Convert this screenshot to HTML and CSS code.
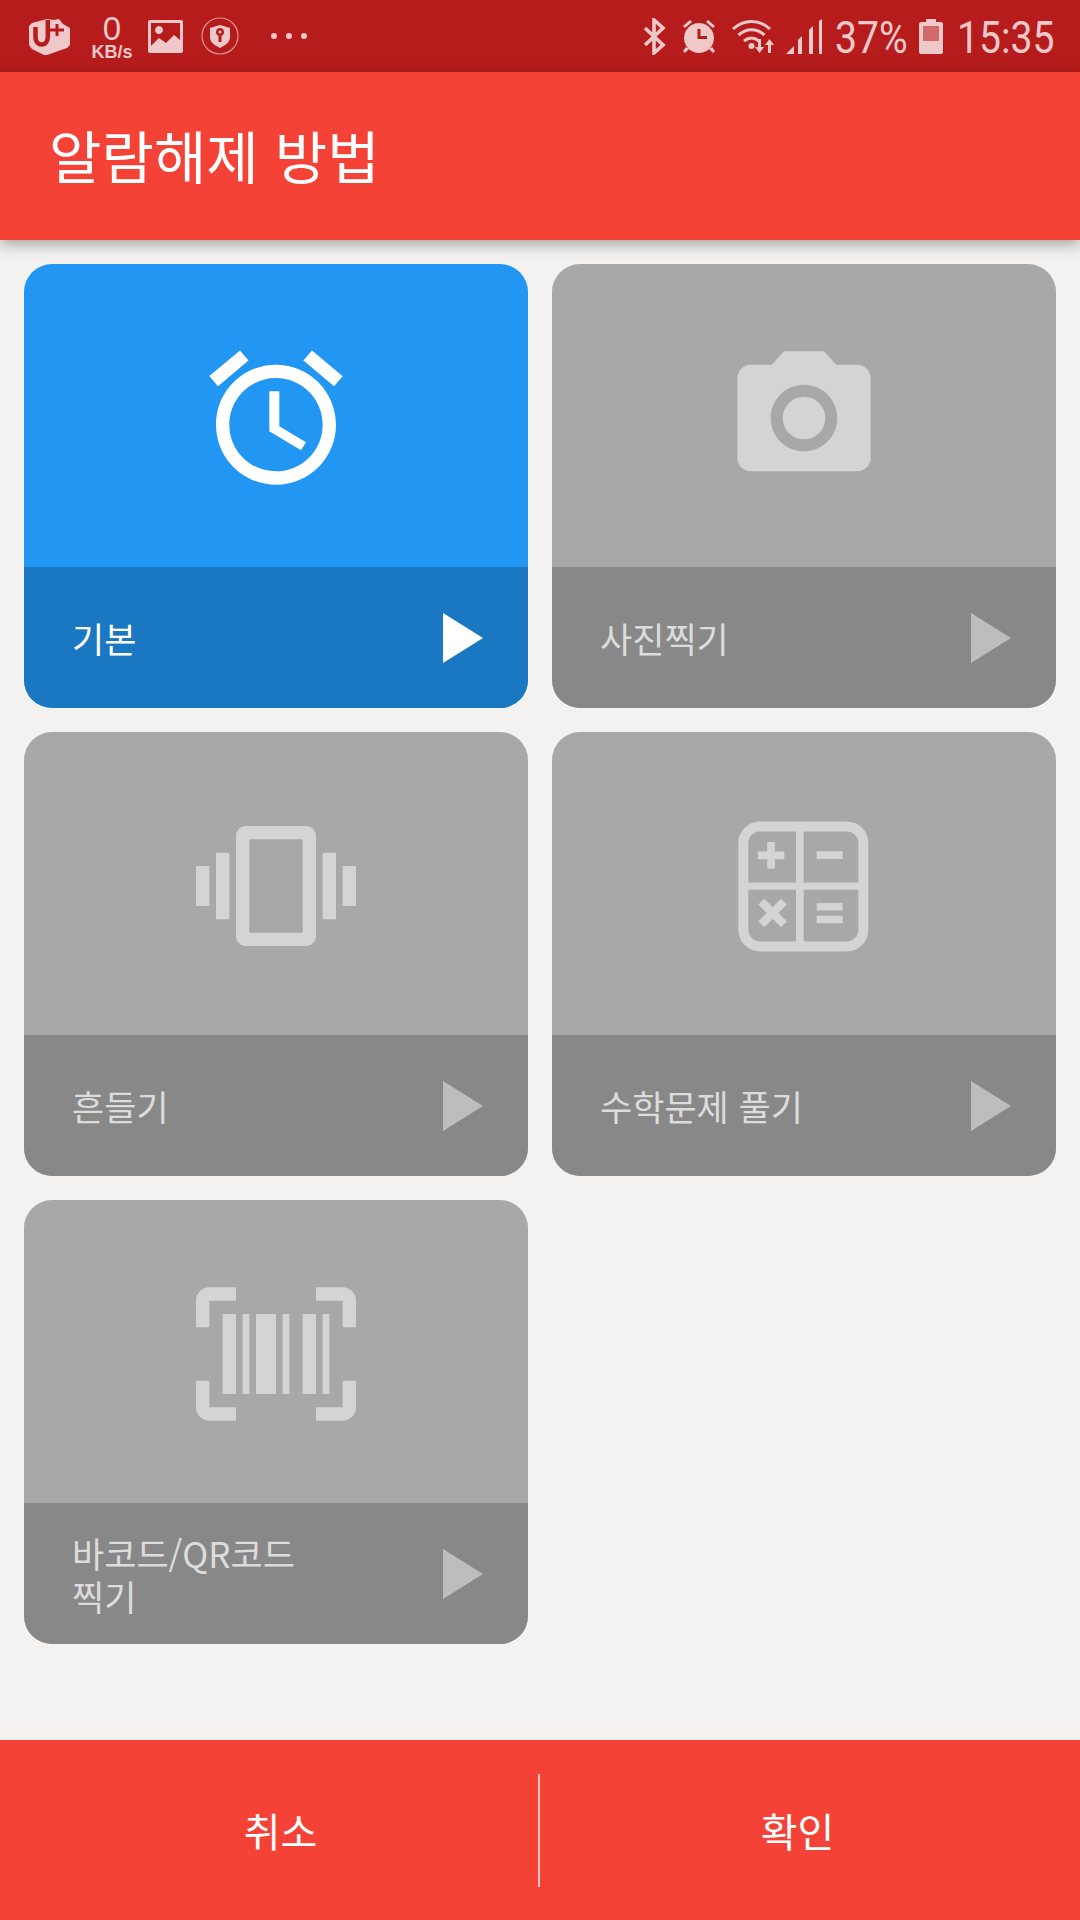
FILE: index.html
```html
<!DOCTYPE html>
<html lang="ko">
<head>
  <meta charset="UTF-8" />
  <title>알람해제 방법</title>
  <link rel="stylesheet" href="styles.css">
</head>
<body>
  <div class="statusbar">
    <div class="status-left">
      <svg class="s-carrier" viewBox="0 0 42 37">
        <path d="M3 5L18 1l7 1 5-1 4 5 7 4v17l-3 3-20 7h-3L3 31l-3-4V8z"/>
        <path class="s-cut" d="M6.500 9v10c0 5 3 7.500 6.150 7.500S18.800 24 18.800 19V2"/>
        <path class="s-cut s-plus" d="M21 12h14M28 6v12"/>
      </svg>
      <div class="speed"><span class="speed-num">0</span><span class="speed-unit">KB/s</span></div>
      <svg class="s-image" viewBox="0 0 35 33"><path fill-rule="evenodd" d="M2 0h31a2 2 0 0 1 2 2v29a2 2 0 0 1-2 2H2a2 2 0 0 1-2-2V2a2 2 0 0 1 2-2zM3 26l8-8 7 5 8-8 6 5V3H3zM11 6a4 4 0 1 0 .01 0z"/></svg>
      <svg class="s-shield" viewBox="0 0 38 38"><circle cx="19" cy="19" r="18" fill="none" stroke="currentColor" stroke-width="1.200" opacity=".7"/><path fill-rule="evenodd" d="M19 8l10 3v9c0 5-4 8-10 11-6-3-10-6-10-11v-9zM19 11a4 4 0 0 0-1.500 7.700V25h3v-6.300A4 4 0 0 0 19 11zM19 13.500a1.500 1.500 0 1 1-.01 0z"/></svg>
      <div class="dots"><i></i><i></i><i></i></div>
    </div>
    <div class="status-right">
      <svg class="s-bt" viewBox="0 0 23 37"><path d="M2 10l18 17-9 8V2l9 8L2 27" fill="none" stroke="currentColor" stroke-width="3.600"/></svg>
      <svg class="s-alarm" viewBox="0 0 36 36"><path fill-rule="evenodd" d="M18 5a15 15 0 1 1-.01 0zM16.500 11v10H26v-3h-6.500v-7z"/><path d="M2 8l7-6 2 2-7 6zM34 8l-7-6-2 2 7 6zM5 29l-3 4 2 2 4-4zM31 29l3 4-2 2-4-4z"/></svg>
      <svg class="s-wifi" viewBox="0 0 47 35"><path d="M2 10c11-10 26-10 37 0M7.500 16c8-7 18-7 26 0M13 22c5-4 10-4 15 0" fill="none" stroke="currentColor" stroke-width="3"/><circle cx="20.500" cy="27" r="3"/><path d="M27 20h3v8h3l-4.500 6-4.500-6h3zM40 34h-3v-8h-3l4.500-6 4.500 6h-3z"/></svg>
      <svg class="s-signal" viewBox="0 0 36 35"><path d="M0 35l8-8v8zM12 35V21l4-4v18zM23 35V11l4-4v28zM33 35V2l3-2v35z"/></svg>
      <span class="s-pct">37%</span>
      <svg class="s-batt" viewBox="0 0 24 35"><path fill-rule="evenodd" d="M7 0h10v3h5a2 2 0 0 1 2 2v28a2 2 0 0 1-2 2H2a2 2 0 0 1-2-2V5a2 2 0 0 1 2-2h5zM4 7v15h16V7z"/><rect x="4" y="7" width="16" height="15" opacity=".45"/></svg>
      <span class="s-time">15:35</span>
    </div>
  </div>

  <div class="appbar">
    <h1 class="title">알람해제 방법</h1>
  </div>

  <div class="content">
    <div class="grid">
      <div class="card active">
        <div class="card-top">
          <svg class="icon" viewBox="0 0 24 24"><path d="M22 5.720l-4.600-3.860-1.290 1.530 4.600 3.860L22 5.720zM7.880 3.390L6.600 1.860 2 5.710l1.290 1.530 4.590-3.850zM12.500 8H11v6l4.750 2.850.75-1.230-4-2.370V8zM12 4c-4.970 0-9 4.030-9 9s4.030 9 9 9 9-4.030 9-9-4.030-9-9-9zm0 16c-3.870 0-7-3.130-7-7s3.130-7 7-7 7 3.130 7 7-3.130 7-7 7z"/></svg>
        </div>
        <div class="card-bottom">
          <span class="label">기본</span>
          <svg class="arrow" viewBox="0 0 40 50"><path d="M0 0l40 25L0 50z"/></svg>
        </div>
      </div>

      <div class="card">
        <div class="card-top">
          <svg class="icon" viewBox="0 0 24 24"><circle cx="12" cy="12" r="3.200"/><path d="M9 2L7.170 4H4c-1.100 0-2 .9-2 2v12c0 1.100.9 2 2 2h16c1.100 0 2-.9 2-2V6c0-1.100-.9-2-2-2h-3.170L15 2H9zm3 15c-2.760 0-5-2.240-5-5s2.240-5 5-5 5 2.240 5 5-2.240 5-5 5z"/></svg>
        </div>
        <div class="card-bottom">
          <span class="label">사진찍기</span>
          <svg class="arrow" viewBox="0 0 40 50"><path d="M0 0l40 25L0 50z"/></svg>
        </div>
      </div>

      <div class="card">
        <div class="card-top">
          <svg class="icon" viewBox="0 0 24 24"><path d="M0 15h2V9H0v6zm3 2h2V7H3v10zm19-8v6h2V9h-2zm-3 8h2V7h-2v10zM16.500 3h-9C6.670 3 6 3.670 6 4.500v15c0 .83.67 1.500 1.500 1.500h9c.83 0 1.500-.67 1.500-1.500v-15c0-.83-.67-1.500-1.500-1.500zM16 19H8V5h8v14z"/></svg>
        </div>
        <div class="card-bottom">
          <span class="label">흔들기</span>
          <svg class="arrow" viewBox="0 0 40 50"><path d="M0 0l40 25L0 50z"/></svg>
        </div>
      </div>

      <div class="card">
        <div class="card-top">
          <svg class="icon" viewBox="0 0 24 24">
            <rect x="2.900" y="3.060" width="18" height="18" rx="2.500" fill="none" stroke="currentColor" stroke-width="1.500"/>
            <path d="M10.800 3h1.150v18h-1.150zM3 11.460h18v1.090H3zM6.480 5.410h1.150v1.420h1.420v1.150H7.630v1.420H6.480V7.980H5.060V6.830h1.420zM13.900 6.800h3.900v1.150h-3.900zM13.900 14.550h3.900v1.110h-3.900zM13.900 16.450h3.900v1.150h-3.900z"/>
            <path d="M5.600 14.350l3.400 3.400M9 14.350l-3.400 3.400" stroke="currentColor" stroke-width="1.250"/>
          </svg>
        </div>
        <div class="card-bottom">
          <span class="label">수학문제 풀기</span>
          <svg class="arrow" viewBox="0 0 40 50"><path d="M0 0l40 25L0 50z"/></svg>
        </div>
      </div>

      <div class="card">
        <div class="card-top">
          <svg class="icon" viewBox="0 0 24 24"><path d="M0 8V4a2 2 0 0 1 2-2h4v2H2v4zM18 2h4a2 2 0 0 1 2 2v4h-2V4h-4zM0 16v4a2 2 0 0 0 2 2h4v-2H2v-4zM18 22h4a2 2 0 0 0 2-2v-4h-2v4h-4zM4 6h2v12H4zM7 6h1v12H7zM9 6h3v12H9zM13 6h1v12h-1zM16 6h2v12h-2zM19 6h1v12h-1z"/></svg>
        </div>
        <div class="card-bottom">
          <span class="label">바코드/QR코드<br>찍기</span>
          <svg class="arrow" viewBox="0 0 40 50"><path d="M0 0l40 25L0 50z"/></svg>
        </div>
      </div>
    </div>
  </div>

  <div class="bottombar">
    <div class="bottom-btn">취소</div>
    <div class="divider"></div>
    <div class="bottom-btn">확인</div>
  </div>
</body>
</html>
```

FILE: styles.css
```css
* {
  box-sizing: border-box;
}

html, body {
  margin: 0;
  padding: 0;
}

body {
  width: 1080px;
  height: 1920px;
  display: flex;
  flex-direction: column;
  background: #f3f2f1;
  font-family: "Noto Sans CJK KR", "Noto Sans", sans-serif;
  overflow: hidden;
}

/* status bar */
.statusbar {
  height: 72px;
  flex: none;
  background: #b71c1c;
  color: #efc9c9;
  display: flex;
  justify-content: space-between;
  align-items: center;
  padding: 0 27px 0 29px;
}

.statusbar svg {
  display: block;
  fill: currentColor;
  flex: none;
}

.status-left, .status-right {
  display: flex;
  align-items: center;
}

.s-carrier { width: 42px; height: 37px; }

.s-carrier .s-cut {
  fill: none;
  stroke: #b71c1c;
  stroke-width: 4.500;
}

.s-carrier .s-plus {
  stroke-width: 3;
}

.speed {
  width: 42px;
  margin: 3px 0 0 20px;
  display: flex;
  flex-direction: column;
  align-items: center;
  font-family: "Liberation Sans", sans-serif;
  font-weight: bold;
}

.speed-num {
  font-size: 33px;
  line-height: 30px;
  font-weight: normal;
}

.speed-unit {
  font-size: 18px;
  line-height: 17px;
  white-space: nowrap;
}

.s-image { width: 35px; height: 33px; margin-left: 15px; }
.s-shield { width: 38px; height: 38px; margin-left: 18px; }

.dots {
  display: flex;
  gap: 9px;
  margin-left: 32px;
}

.dots i {
  display: block;
  width: 6px;
  height: 6px;
  border-radius: 50%;
  background: currentColor;
}

.s-bt { width: 23px; height: 37px; }
.s-alarm { width: 36px; height: 36px; margin-left: 15px; }
.s-wifi { width: 47px; height: 35px; margin-left: 14px; }
.s-signal { width: 36px; height: 35px; margin-left: 8px; }
.s-batt { width: 24px; height: 35px; margin-left: 14px; }

.s-pct, .s-time {
  font-family: Roboto, sans-serif;
  font-size: 44px;
  line-height: 48px;
  display: block;
  margin-top: 4px;
  transform: scaleX(.89);
  transform-origin: left center;
  white-space: nowrap;
}

.s-pct { margin-left: 13px; width: 70px; }
.s-time { margin-left: 14px; width: 96px; }

/* app bar */
.appbar {
  height: 168px;
  flex: none;
  background: #f44336;
  display: flex;
  align-items: center;
  padding: 0 0 4px 49px;
  box-shadow: 0 4px 14px rgba(0, 0, 0, 0.35);
  position: relative;
}

.title {
  margin: 0;
  color: #fff;
  font-size: 57px;
  font-weight: 400;
  line-height: 1;
}

/* cards */
.content {
  flex: 1;
  padding: 24px;
}

.grid {
  display: grid;
  grid-template-columns: 504px 504px;
  grid-auto-rows: 444px;
  gap: 24px;
}

.card {
  border-radius: 28px;
  overflow: hidden;
  display: flex;
  flex-direction: column;
  color: #d4d4d4;
  background: #a8a8a8;
}

.card.active {
  color: #fff;
  background: #2196f3;
}

.card-top {
  height: 303px;
  flex: none;
  display: flex;
  justify-content: center;
  align-items: center;
  padding-top: 5px;
}

.icon {
  width: 160px;
  height: 160px;
  fill: currentColor;
}

.card-bottom {
  flex: 1;
  background: #888;
  display: flex;
  justify-content: space-between;
  align-items: center;
  padding: 0 45px 0 48px;
}

.card.active .card-bottom {
  background: #1a78c2;
}

.label {
  font-size: 35px;
  line-height: 43px;
  color: #dcdcdc;
}

.card.active .label {
  color: #fff;
}

.arrow {
  width: 40px;
  height: 50px;
  flex: none;
  fill: #bdbdbd;
}

.card.active .arrow {
  fill: #fff;
}

/* bottom buttons */
.bottombar {
  height: 180px;
  flex: none;
  background: #f44336;
  display: flex;
  align-items: center;
  padding: 0 25px 0 23px;
}

.bottom-btn {
  flex: 1;
  text-align: center;
  color: #fff;
  font-size: 40px;
  font-weight: 400;
}

.divider {
  width: 2px;
  height: 113px;
  background: #f7c5c0;
  flex: none;
}
```
